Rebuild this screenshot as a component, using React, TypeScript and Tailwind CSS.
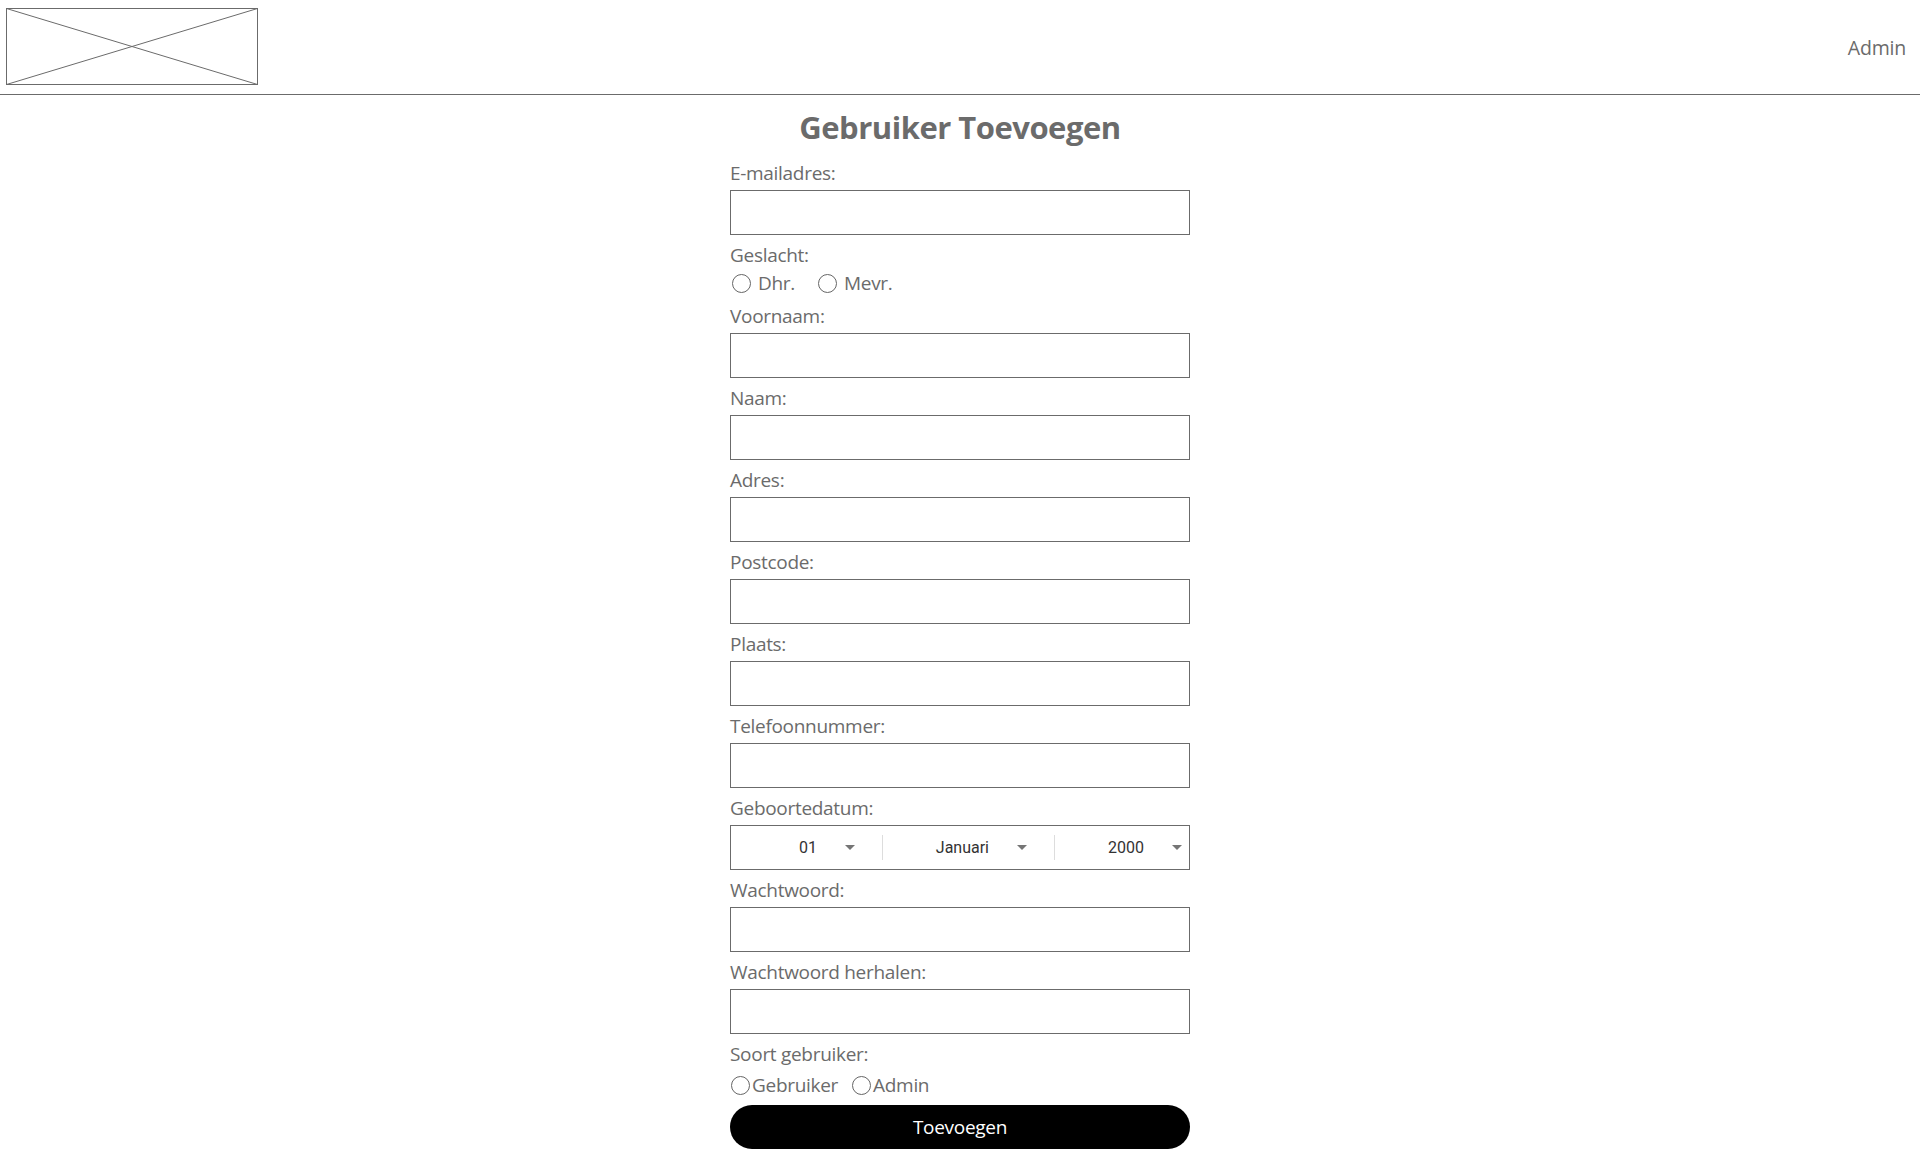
import { useState } from "react";

const fields = [
  "Voornaam:",
  "Naam:",
  "Adres:",
  "Postcode:",
  "Plaats:",
  "Telefoonnummer:",
];

function Label({ children }: { children: React.ReactNode }) {
  return (
    <label className="block h-[28px] text-[19px] leading-[29px] tracking-[-0.3px] mb-[3px]">{children}</label>
  );
}

function TextInput({ type = "text" }: { type?: string }) {
  return (
    <input
      type={type}
      className="block w-full h-[45px] border border-[#6b6b6b] bg-white px-2 text-[18px] outline-none"
    />
  );
}

function Arrow() {
  return (
    <svg width="10" height="5" viewBox="0 0 10 5" className="shrink-0">
      <path d="M0 0h10L5 5z" fill="#757575" />
    </svg>
  );
}

function Radio({ name, checked, onChange }: { name: string; checked: boolean; onChange: () => void }) {
  return (
    <input
      type="radio"
      name={name}
      checked={checked}
      onChange={onChange}
      className="appearance-none w-[19px] h-[19px] rounded-full border-[1.7px] border-[#666] bg-white checked:bg-[#666] checked:shadow-[inset_0_0_0_3px_white] shrink-0 m-0"
    />
  );
}

export default function App() {
  const [gender, setGender] = useState("");
  const [role, setRole] = useState("");

  return (
    <div className="min-h-screen bg-white text-[#6b6b6b]" style={{ fontFamily: '"Open Sans", "Noto Sans", sans-serif' }}>
      {/* Header */}
      <header className="flex items-start justify-between h-[95px] border-b border-[#6b6b6b] px-[6px] pt-[8px]">
        <svg width="252" height="77" viewBox="0 0 252 77" className="block">
          <rect x="0.5" y="0.5" width="251" height="76" fill="none" stroke="#6b6b6b" strokeWidth="1" />
          <line x1="0.5" y1="0.5" x2="251.5" y2="76.5" stroke="#6b6b6b" strokeWidth="1" />
          <line x1="0.5" y1="76.5" x2="251.5" y2="0.5" stroke="#6b6b6b" strokeWidth="1" />
        </svg>
        <a href="#" className="text-[19.5px] leading-[27px] tracking-[-0.2px] mt-[26px] mr-[8px]">
          Admin
        </a>
      </header>

      <main className="flex flex-col items-center">
        <h1 className="text-[31px] leading-[40px] tracking-[-0.5px] font-bold mt-[12px] mb-[12px]">
          Gebruiker Toevoegen
        </h1>

        <form className="w-[460px] flex flex-col" onSubmit={(e) => e.preventDefault()}>
          <Label>E-mailadres:</Label>
          <TextInput type="email" />

          <div className="mt-[6px]">
            <label className="block h-[28px] text-[19px] leading-[29px] tracking-[-0.3px]">Geslacht:</label>
            <div className="flex items-center h-[33px] pl-[2px] pb-[4px] text-[19px] tracking-[-0.3px]">
              <label className="flex items-center gap-[7px] mr-[23px]">
                <Radio name="gender" checked={gender === "m"} onChange={() => setGender("m")} />
                Dhr.
              </label>
              <label className="flex items-center gap-[7px]">
                <Radio name="gender" checked={gender === "v"} onChange={() => setGender("v")} />
                Mevr.
              </label>
            </div>
          </div>

          {fields.map((f, i) => (
            <div key={f} className={i === 0 ? "" : "mt-[6px]"}>
              <Label>{f}</Label>
              <TextInput />
            </div>
          ))}

          <div className="mt-[6px]">
            <Label>Geboortedatum:</Label>
            <div className="flex h-[45px] border border-[#6b6b6b] text-[16px] text-[#333]" style={{ fontFamily: "Roboto, sans-serif" }}>
              <div className="w-[151px] flex items-center justify-end gap-[28px] pr-[27px]">
                <span>01</span>
                <Arrow />
              </div>
              <div className="w-px bg-[#dddddd] my-[9px]" />
              <div className="w-[171px] flex items-center justify-end gap-[28px] pr-[27px]">
                <span>Januari</span>
                <Arrow />
              </div>
              <div className="w-px bg-[#dddddd] my-[9px]" />
              <div className="flex-1 flex items-center justify-end gap-[28px] pr-[7px]">
                <span>2000</span>
                <Arrow />
              </div>
            </div>
          </div>

          <div className="mt-[6px]">
            <Label>Wachtwoord:</Label>
            <TextInput type="password" />
          </div>

          <div className="mt-[6px]">
            <Label>Wachtwoord herhalen:</Label>
            <TextInput type="password" />
          </div>

          <div className="mt-[6px]">
            <label className="block h-[28px] text-[19px] leading-[29px] tracking-[-0.3px]">Soort gebruiker:</label>
            <div className="flex items-center h-[37px] pl-[1px] pb-[3px] text-[19px] tracking-[-0.3px]">
              <label className="flex items-center gap-[2px] mr-[14px]">
                <Radio name="role" checked={role === "g"} onChange={() => setRole("g")} />
                Gebruiker
              </label>
              <label className="flex items-center gap-[2px]">
                <Radio name="role" checked={role === "a"} onChange={() => setRole("a")} />
                Admin
              </label>
            </div>
          </div>

          <button
            type="submit"
            className="h-[44px] w-full rounded-full bg-black text-white text-[19px] leading-[27px] tracking-[-0.3px]"
          >
            Toevoegen
          </button>
        </form>
      </main>
    </div>
  );
}
